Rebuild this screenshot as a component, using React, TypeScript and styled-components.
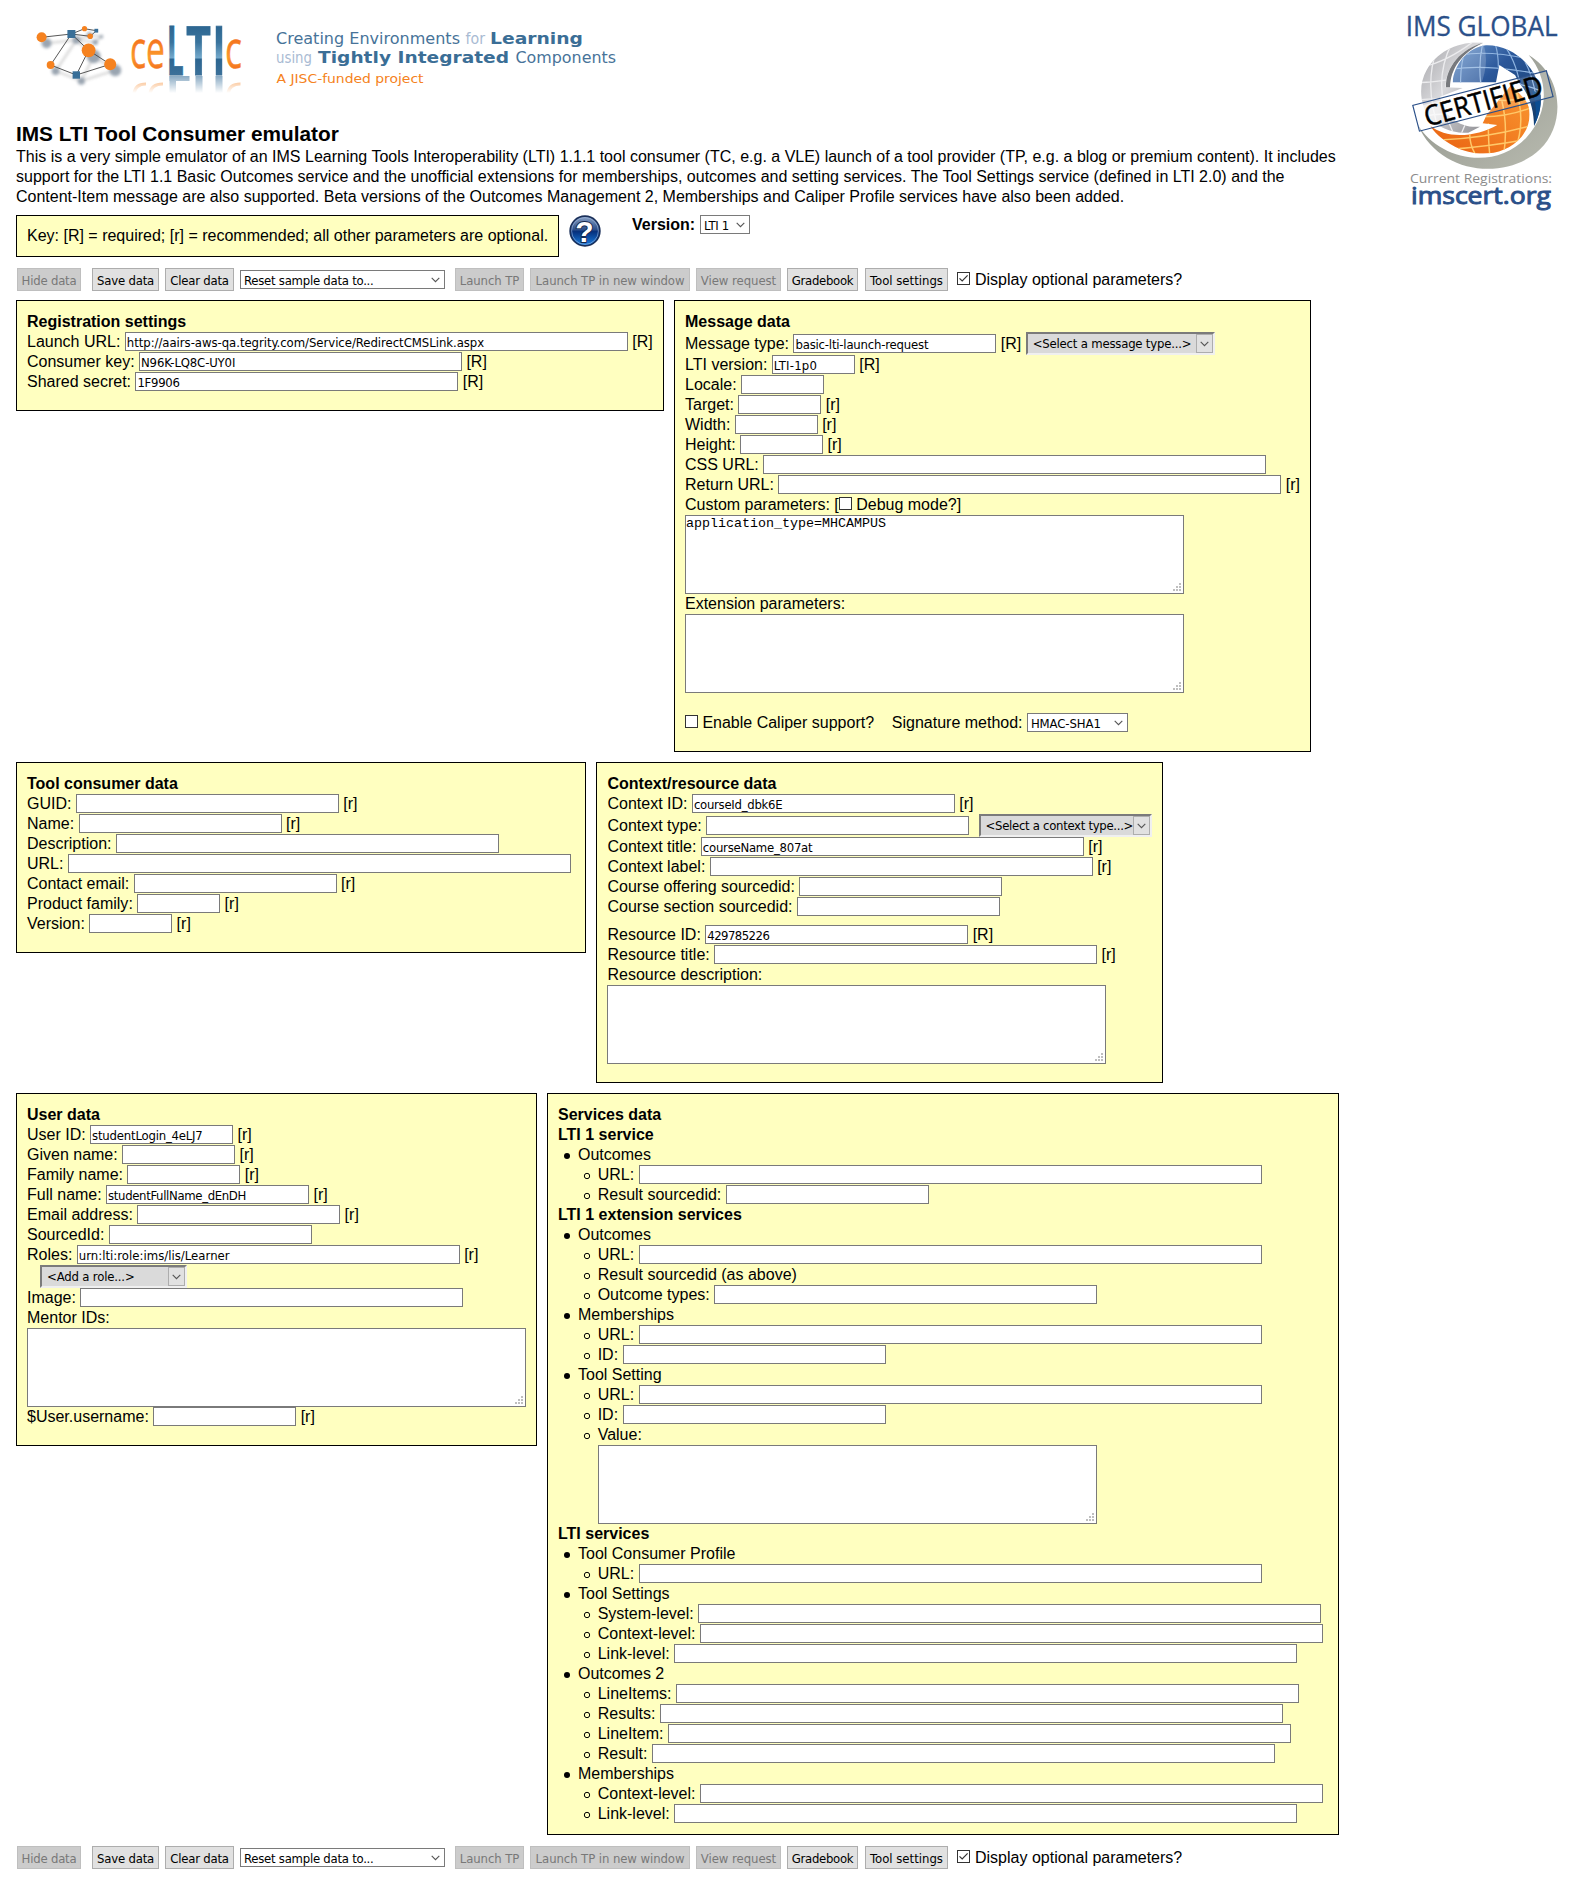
import React from "react";
import styled, { createGlobalStyle, css } from "styled-components";

const ui = `"DejaVu Sans Condensed", "DejaVu Sans", sans-serif`;

const GlobalStyle = createGlobalStyle`
  * { box-sizing: border-box; }
  body {
    margin: 0;
    background: #fff;
    color: #000;
    font: 16px/20px "Liberation Sans", Arial, sans-serif;
  }
`;

const Page = styled.div`
  width: 1583px;
  height: 1886px;
  overflow: hidden;
`;
const Top = styled.header`
  display: flex;
  align-items: flex-start;
  height: 268px;
`;
const Intro = styled.div`
  width: 1380px;
  padding-left: 16px;
`;
const Banner = styled.svg`
  display: block;
  width: 640px;
  height: 122px;
  margin-left: -16px;
`;
const Badge = styled.svg`
  display: block;
  width: 203px;
  height: 220px;
`;
const Heading = styled.h1`
  height: 25px;
  margin: 0;
  font-size: 20.8px;
  line-height: 23px;
`;
const Lead = styled.p`
  margin: 0 0 8px;
  width: 1334px;
  white-space: nowrap;
`;
const KeyRow = styled.div`
  display: flex;
  align-items: flex-start;
`;
const KeyBox = styled.div`
  width: 543px;
  height: 42px;
  padding: 10px;
  border: 1px solid #000;
  background: #ffffc0;
  white-space: nowrap;
`;
const HelpIcon = styled.svg`
  width: 32px;
  height: 32px;
  margin: 0 31px 0 10px;
`;
const VersionLabel = styled.strong`
  width: 68px;
  line-height: 19px;
`;

const Toolbar = styled.div<{ $before?: number }>`
  display: flex;
  align-items: flex-start;
  height: 32px;
  margin-top: ${(p) => p.$before ?? 0}px;
  padding-left: 17px;
`;
const Button = styled.button<{ $w: number; $gap: number; $track?: number }>`
  flex: none;
  width: ${(p) => p.$w}px;
  height: 23px;
  margin: 0 ${(p) => p.$gap}px 0 0;
  padding: 1px 0 0;
  border: 1px solid #adadad;
  background: #e1e1e1;
  color: #000;
  font: 13px/17px ${ui};
  letter-spacing: ${(p) => p.$track ?? -0.2}px;
  white-space: nowrap;
  &:disabled {
    border-color: #bfbfbf;
    background: #ccc;
    color: #787878;
  }
`;
const OptionLabel = styled.label`
  display: flex;
  gap: 5px;
  margin-left: 9px;
  line-height: 24px;
`;

const selectBase = css<{ $w: number; $track?: number }>`
  display: flex;
  flex: none;
  justify-content: space-between;
  width: ${(p) => p.$w}px;
  font: 13px/18px ${ui};
  letter-spacing: ${(p) => p.$track ?? -0.25}px;
  white-space: nowrap;
`;
const PlainSelect = styled.div<{ $w: number; $top?: number; $gap?: number; $track?: number }>`
  ${selectBase}
  height: 19px;
  margin: ${(p) => p.$top ?? 0}px ${(p) => p.$gap ?? 0}px 0 0;
  padding: 1px 4px 0 3px;
  border: 1px solid #7a7a7a;
  background: #fff;
  line-height: 17px;
`;
const GreySelect = styled.div<{ $w: number; $left?: number; $track?: number }>`
  ${selectBase}
  height: 23px;
  margin: -1px 0 0 ${(p) => p.$left ?? 0}px;
  padding-left: 5px;
  border: 2px solid;
  border-color: #7b7b7b #f0f0f0 #f0f0f0 #7b7b7b;
  background: #dadada;
  line-height: 20px;
`;
const DropButton = styled.span`
  display: flex;
  align-items: center;
  justify-content: center;
  width: 17px;
  height: 19px;
  border: 1px solid #adadad;
  background: #e1e1e1;
`;
const ArrowSvg = styled.svg`
  width: 9px;
  height: 6px;
  align-self: center;
`;

const Panels = styled.div`
  display: flex;
  align-items: flex-start;
  gap: 10px;
  margin: 0 0 10px 16px;
`;
const Panel = styled.section<{ $w: number; $bottom?: number; $left?: number }>`
  width: ${(p) => p.$w}px;
  padding: 10px 0 ${(p) => p.$bottom ?? 19}px ${(p) => p.$left ?? 10}px;
  border: 1px solid #000;
  background: #ffffc0;
`;
const PanelTitle = styled.h2`
  height: 20px;
  margin: 0;
  font-size: 16px;
  line-height: 22px;
`;
const Line = styled.div<{ $tall?: boolean; $before?: number }>`
  display: flex;
  align-items: flex-start;
  gap: 4.4px;
  height: ${(p) => (p.$tall ? 23 : 20)}px;
  padding-top: ${(p) => (p.$tall ? 2 : 0)}px;
  margin-top: ${(p) => p.$before ?? 0}px;
  line-height: 22px;
  white-space: nowrap;
`;
const TextInput = styled.input<{ $w: number; $track?: number }>`
  flex: none;
  width: ${(p) => p.$w}px;
  height: 19px;
  margin: 1px 0 0;
  padding: 2px 1px 0;
  border: 1px solid #7a7a7a;
  border-radius: 0;
  background: #fff;
  color: #000;
  font: 13px/15px ${ui};
  letter-spacing: ${(p) => p.$track ?? -0.2}px;
  outline: none;
`;
const AreaWrap = styled.div<{ $left?: number }>`
  position: relative;
  width: 499px;
  height: 79px;
  margin: 1px 0 -1px ${(p) => p.$left ?? 0}px;
`;
const AreaInput = styled.textarea`
  display: block;
  width: 499px;
  height: 79px;
  padding: 0;
  border: 1px solid #7a7a7a;
  background: #fff;
  color: #000;
  font: 13.333px/15px "Liberation Mono", monospace;
  resize: none;
  outline: none;
`;
const GripSvg = styled.svg`
  position: absolute;
  right: 3px;
  bottom: 3px;
  width: 8px;
  height: 8px;
`;
const Tick = styled.span<{ $top: number }>`
  flex: none;
  width: 13px;
  height: 13px;
  margin-top: ${(p) => p.$top}px;
  border: 1px solid #333;
  background: #fff;
  svg { display: block; width: 11px; height: 11px; }
`;
const Pair = styled.span`
  display: flex;
`;
const MarkSvg = styled.svg<{ $left: number }>`
  flex: none;
  width: 8px;
  height: 8px;
  margin: 7.5px 2.6px 0 ${(p) => p.$left}px;
`;

const Arrow = () => (
  <ArrowSvg viewBox="0 0 9 6">
    <path d="M0.7 0.8 4.5 4.7 8.3 0.8" fill="none" stroke="#555" strokeWidth="1.1" />
  </ArrowSvg>
);

const Check = ({ top, checked }: { top: number; checked?: boolean }) => (
  <Tick $top={top}>
    {checked && (
      <svg viewBox="0 0 11 11">
        <path d="M1.5 5.3 4.2 8 9.6 2.4" fill="none" stroke="#333" strokeWidth="1.2" />
      </svg>
    )}
  </Tick>
);

const Area = ({ value, left }: { value?: string; left?: number }) => (
  <AreaWrap $left={left}>
    <AreaInput defaultValue={value} spellCheck={false} />
    <GripSvg viewBox="0 0 8 8" fill="#bfbfbf">
      <path d="M6 0h2v2H6zM3 3h2v2H3zM6 3h2v2H6zM0 6h2v2H0zM3 6h2v2H3zM6 6h2v2H6z" />
    </GripSvg>
  </AreaWrap>
);

type FieldProps = {
  label: string;
  w: number;
  value?: string;
  track?: number;
  flag?: string;
  before?: number;
  tall?: boolean;
  children?: React.ReactNode;
};
const Field = ({ label, w, value, track, flag, before, tall, children }: FieldProps) => (
  <Line $before={before} $tall={tall}>
    <span>{label}:</span>
    <TextInput $w={w} $track={track} defaultValue={value} />
    {flag && <span>[{flag}]</span>}
    {children}
  </Line>
);

const Picker = ({ text, w, left, track }: { text: string; w: number; left?: number; track?: number }) => (
  <GreySelect $w={w} $left={left} $track={track}>
    <span>{text}</span>
    <DropButton><Arrow /></DropButton>
  </GreySelect>
);

const Item = ({ text }: { text: string }) => (
  <Line>
    <MarkSvg $left={5} viewBox="0 0 8 8"><circle cx="4" cy="4" r="3" /></MarkSvg>
    <span>{text}</span>
  </Line>
);
const SubItem = ({ text, w }: { text: string; w?: number }) => (
  <Line>
    <MarkSvg $left={24.7} viewBox="0 0 8 8">
      <circle cx="4" cy="4" r="2.7" fill="none" stroke="#000" strokeWidth="1" />
    </MarkSvg>
    <span>{text}</span>
    {w && <TextInput $w={w} />}
  </Line>
);

const Actions = ({ before }: { before?: number }) => (
  <Toolbar $before={before}>
    <Button $w={64} $gap={11} disabled>Hide data</Button>
    <Button $w={67} $gap={6}>Save data</Button>
    <Button $w={69} $gap={6}>Clear data</Button>
    <PlainSelect $w={205} $top={2} $gap={10}><span>Reset sample data to...</span><Arrow /></PlainSelect>
    <Button $w={69} $gap={6} $track={-0.1} disabled>Launch TP</Button>
    <Button $w={160} $gap={6} $track={-0.08} disabled>Launch TP in new window</Button>
    <Button $w={85} $gap={6} $track={-0.05} disabled>View request</Button>
    <Button $w={71} $gap={7} $track={-0.3}>Gradebook</Button>
    <Button $w={83} $gap={0} $track={0}>Tool settings</Button>
    <OptionLabel><Check top={4} checked />Display optional parameters?</OptionLabel>
  </Toolbar>
);

const nodes: [number, number, number, boolean][] = [
  [41.6, 37.3, 5, false], [84.5, 28.7, 2.6, false], [90.2, 36.3, 2.8, false],
  [88.6, 50.3, 6.9, false], [110.2, 64.3, 6, false], [50.6, 65, 3.9, false],
  [71.4, 34, 4, true], [96.3, 30.7, 1.9, true], [76.3, 75, 3.7, true],
];
const links = "M41.6 37.3 71.4 34 84.5 28.7 96.3 30.7 90.2 36.3 71.4 34 50.6 65 76.3 75 110.2 64.3M71.4 34 88.6 50.3 110.2 64.3M88.6 50.3 76.3 75";

const Wordmark = () => (
  <g fontFamily="'Open Sans', sans-serif">
    <g fill="url(#flame)" stroke="url(#flame)" strokeWidth=".4" fontSize="53">
      <text x="130" y="68" textLength="35" lengthAdjust="spacingAndGlyphs">ce</text>
      <text x="225" y="68" textLength="17" lengthAdjust="spacingAndGlyphs">c</text>
    </g>
    <g fill="url(#steel)" stroke="url(#steel)" strokeWidth=".8" fontSize="68" fontWeight="700">
      <text x="166.800" y="74.500" textLength="17" lengthAdjust="spacingAndGlyphs">L</text>
      <text x="186" y="74.500" textLength="25" lengthAdjust="spacingAndGlyphs">T</text>
      <text x="212.500" y="74.500" textLength="13" lengthAdjust="spacingAndGlyphs">I</text>
    </g>
  </g>
);

const CelticBanner = () => (
  <Banner viewBox="0 0 640 122">
    <defs>
      <filter id="soft"><feGaussianBlur stdDeviation="1.6" /></filter>
      <linearGradient id="steel" gradientUnits="userSpaceOnUse" x1="0" y1="25" x2="0" y2="75">
        <stop offset="0" stopColor="#2c6590" />
        <stop offset=".35" stopColor="#3a749d" />
        <stop offset=".66" stopColor="#74a9cb" />
        <stop offset=".68" stopColor="#2c6590" />
        <stop offset="1" stopColor="#3b7099" />
      </linearGradient>
      <linearGradient id="flame" gradientUnits="userSpaceOnUse" x1="0" y1="38" x2="0" y2="70">
        <stop offset="0" stopColor="#f4701d" />
        <stop offset=".6" stopColor="#fb9a2c" />
        <stop offset="1" stopColor="#f36f1e" />
      </linearGradient>
      <linearGradient id="fade" gradientUnits="userSpaceOnUse" x1="0" y1="76" x2="0" y2="93">
        <stop offset="0" stopColor="#fff" stopOpacity=".65" />
        <stop offset="1" stopColor="#fff" stopOpacity="0" />
      </linearGradient>
      <mask id="mirror"><rect x="120" y="76" width="130" height="17" fill="url(#fade)" /></mask>
    </defs>
    <g filter="url(#soft)" opacity=".7" transform="translate(5 6)">
      <path d={links} fill="none" stroke="#aaa" strokeWidth="1.500" />
      {nodes.map(([x, y, r], i) => <circle key={i} cx={x} cy={y} r={r} fill="#6f7f90" />)}
    </g>
    <path d={links} fill="none" stroke="#444" strokeWidth=".9" />
    {nodes.map(([x, y, r, sq], i) => sq
      ? <rect key={i} x={x - r} y={y - r} width={2 * r} height={2 * r} fill="#396f98" />
      : <circle key={i} cx={x} cy={y} r={r} fill="#f58220" />)}
    <Wordmark />
    <g mask="url(#mirror)">
      <g fill="#4b7da4">
        <rect x="169.500" y="76" width="6.500" height="17" />
        <rect x="169.500" y="76" width="20" height="5" />
        <rect x="195.500" y="76" width="7" height="17" />
        <rect x="215.500" y="76" width="7" height="17" />
      </g>
      <g fill="none" stroke="#f58220" strokeWidth="3.200">
        <path d="M134 94Q135 84 146 84" />
        <path d="M150 94Q151 84 163 84" />
        <path d="M228 94Q229 84 240.500 84" />
      </g>
    </g>
    <g fontFamily="'DejaVu Sans', sans-serif" fontSize="16" fill="#477399">
      <text x="276" y="44" textLength="184" lengthAdjust="spacingAndGlyphs">Creating Environments</text>
      <text x="465.500" y="44" fill="#a9bbd3" textLength="19.500" lengthAdjust="spacingAndGlyphs">for</text>
      <text x="490" y="44" fontWeight="700" fill="#3b6e96" textLength="93" lengthAdjust="spacingAndGlyphs">Learning</text>
      <text x="276" y="63" fill="#a9bbd3" textLength="36" lengthAdjust="spacingAndGlyphs">using</text>
      <text x="318" y="63" fontWeight="700" fill="#3b6e96" textLength="191" lengthAdjust="spacingAndGlyphs">Tightly Integrated</text>
      <text x="515.500" y="63" textLength="100.500" lengthAdjust="spacingAndGlyphs">Components</text>
      <text x="276.500" y="83" fontSize="13" fill="#f58220" textLength="147" lengthAdjust="spacingAndGlyphs">A JISC-funded project</text>
    </g>
  </Banner>
);

const CertifiedBadge = () => (
  <Badge viewBox="0 0 609 660">
    <defs>
      <linearGradient id="silver" x1="0" y1="0" x2="1" y2="1">
        <stop offset="0" stopColor="#9b9b9f" />
        <stop offset=".45" stopColor="#d9d9dc" />
        <stop offset="1" stopColor="#85858a" />
      </linearGradient>
      <linearGradient id="azure" x1="0" y1="0" x2="1" y2="1">
        <stop offset="0" stopColor="#6d9ad0" />
        <stop offset=".4" stopColor="#2b579a" />
        <stop offset="1" stopColor="#123a66" />
      </linearGradient>
      <linearGradient id="amber" x1="0" y1="1" x2="1" y2="0">
        <stop offset="0" stopColor="#e85f10" />
        <stop offset="1" stopColor="#fb9b33" />
      </linearGradient>
      <linearGradient id="stone" x1="0" y1="0" x2="1" y2="1">
        <stop offset="0" stopColor="#8c9088" />
        <stop offset="1" stopColor="#b9bbb0" />
      </linearGradient>
      <clipPath id="blueClip"><path d="M218 247C222 195 262 143 318 136C400 134 478 205 482 290C484 325 476 350 462 378C462 335 450 285 420 252L405 225L358 195L348 247Z" /></clipPath>
      <clipPath id="orangeClip"><path d="M150 376C200 420 290 410 352 375L308 370L320 345L394 254L436 300C458 330 450 380 425 410C375 470 285 472 225 440C185 420 160 395 150 376Z" /></clipPath>
      <clipPath id="greyClip"><path d="M310 128C245 145 196 200 197 262L248 264L180 290C190 350 240 385 300 380L265 398C215 402 175 380 150 358C118 310 115 255 140 210C170 155 235 122 310 128Z" /></clipPath>
    </defs>
    <text x="77" y="109" fontFamily="'Open Sans', sans-serif" fontSize="83" fill="#2b5089" stroke="#2b5089" strokeWidth="1" textLength="456" lengthAdjust="spacingAndGlyphs">IMS GLOBAL</text>
    <path d="M446 165C548 225 560 370 480 448C385 540 180 530 112 372C175 480 345 515 440 412C505 340 510 240 446 165Z" fill="url(#stone)" />
    <g clipPath="url(#greyClip)">
      <rect x="110" y="110" width="220" height="300" fill="url(#silver)" />
      <path d="M130 200Q200 185 280 125M110 248Q190 245 215 235M115 300Q190 290 300 310M130 350Q200 330 300 360M170 150Q130 260 180 400M215 130Q150 260 225 410M270 340 240 410" fill="none" stroke="#ececee" strokeWidth="4" />
    </g>
    <path d="M198 262C196 200 245 145 310 128C245 158 212 205 210 262Z" fill="#77797d" />
    <g clipPath="url(#blueClip)">
      <rect x="210" y="130" width="280" height="250" fill="url(#azure)" />
      <path d="M210 208Q320 190 490 225M240 165Q330 150 450 178M262 130Q240 190 242 250M308 130Q295 190 302 250M345 130Q355 160 355 200M375 140Q412 190 425 280M420 160Q455 210 468 290M400 250Q440 255 490 275" fill="none" stroke="#8fb4e0" strokeWidth="3.500" />
      <path d="M210 260V130H310Q330 190 300 260Z" fill="#fff" opacity=".2" />
    </g>
    <g clipPath="url(#orangeClip)">
      <rect x="140" y="240" width="320" height="230" fill="url(#amber)" />
      <path d="M180 420Q320 415 460 375M210 448Q320 440 430 420M310 350Q390 350 460 320M350 300Q400 305 450 290M270 390Q265 430 290 470M325 370Q325 430 330 470M365 300Q385 380 370 470M405 260Q440 360 405 450" fill="none" stroke="#ffc869" strokeWidth="4.500" />
    </g>
    <path d="M462 378C474 335 465 300 456 270L482 285C484 325 474 355 462 378Z" fill="#0b4d92" />
    <g transform="translate(308 300) rotate(-15.500)">
      <rect x="-207" y="-37" width="414" height="80" transform="rotate(1)" fill="#fff" fillOpacity=".15" stroke="#2b5089" strokeWidth="3.500" />
      <path d="M-202-33H-85V36H-202Z" fill="#fff" opacity=".6" />
      <text x="-182" y="33" fontFamily="'Open Sans', sans-serif" fontSize="84" fill="#000" stroke="#000" strokeWidth="1.500" textLength="366" lengthAdjust="spacingAndGlyphs">CERTIFIED</text>
    </g>
    <text x="90" y="549" fontFamily="'Open Sans', sans-serif" fontSize="37" fill="#8b8b8b" textLength="426" lengthAdjust="spacingAndGlyphs">Current Registrations:</text>
    <text x="93" y="612" fontFamily="'Open Sans', sans-serif" fontSize="73" fill="#2b5089" stroke="#2b5089" strokeWidth="3" textLength="420" lengthAdjust="spacingAndGlyphs">imscert.org</text>
  </Badge>
);

const Help = () => (
  <HelpIcon viewBox="0 0 32 32">
    <defs>
      <linearGradient id="orb" x1="0" y1="0" x2="0" y2="1">
        <stop offset="0" stopColor="#8ba3c6" />
        <stop offset=".45" stopColor="#2d4f8a" />
        <stop offset=".52" stopColor="#06307c" />
        <stop offset="1" stopColor="#1a7fe2" />
      </linearGradient>
    </defs>
    <circle cx="16" cy="16" r="14.900" fill="url(#orb)" stroke="#1a2f59" strokeWidth="1.600" />
    <circle cx="16" cy="16" r="13.400" fill="none" stroke="#9db6da" strokeWidth=".6" />
    <text x="15.500" y="26.500" textAnchor="middle" fontFamily="'Liberation Sans', sans-serif" fontWeight="700" fontSize="30" fill="#fff" stroke="#14264a" strokeWidth="1.800" strokeLinejoin="round" paintOrder="stroke">?</text>
  </HelpIcon>
);

export default function App() {
  return (
    <Page>
      <GlobalStyle />
      <Top>
        <Intro>
          <CelticBanner />
          <Heading>IMS LTI Tool Consumer emulator</Heading>
          <Lead>
            This is a very simple emulator of an IMS Learning Tools Interoperability (LTI) 1.1.1 tool consumer (TC, e.g. a VLE) launch of a tool provider (TP, e.g. a blog or premium content). It includes<br />
            support for the LTI 1.1 Basic Outcomes service and the unofficial extensions for memberships, outcomes and setting services. The Tool Settings service (defined in LTI 2.0) and the<br />
            Content-Item message are also supported. Beta versions of the Outcomes Management 2, Memberships and Caliper Profile services have also been added.
          </Lead>
          <KeyRow>
            <KeyBox>Key: [R] = required; [r] = recommended; all other parameters are optional.</KeyBox>
            <Help />
            <VersionLabel>Version:</VersionLabel>
            <PlainSelect $w={50} $track={-0.3}><span>LTI 1</span><Arrow /></PlainSelect>
          </KeyRow>
        </Intro>
        <CertifiedBadge />
      </Top>

      <Actions />

      <Panels>
        <Panel $w={648}>
          <PanelTitle>Registration settings</PanelTitle>
          <Field label="Launch URL" w={503} flag="R" track={-0.04} value="http://aairs-aws-qa.tegrity.com/Service/RedirectCMSLink.aspx" />
          <Field label="Consumer key" w={323} flag="R" track={-0.15} value="N96K-LQ8C-UY0I" />
          <Field label="Shared secret" w={323} flag="R" track={-0.3} value="1F9906" />
        </Panel>
        <Panel $w={637}>
          <PanelTitle>Message data</PanelTitle>
          <Field label="Message type" w={203} flag="R" value="basic-lti-launch-request" tall>
            <Picker text="<Select a message type...>" w={189} track={-0.2} />
          </Field>
          <Field label="LTI version" w={83} flag="R" track={0.2} value="LTI-1p0" />
          <Field label="Locale" w={83} />
          <Field label="Target" w={83} flag="r" />
          <Field label="Width" w={83} flag="r" />
          <Field label="Height" w={83} flag="r" />
          <Field label="CSS URL" w={503} />
          <Field label="Return URL" w={503} flag="r" />
          <Line>
            <span>Custom parameters:</span>
            <Pair>[<Check top={3} /></Pair>
            <span>Debug mode?]</span>
          </Line>
          <Area value="application_type=MHCAMPUS" />
          <Line>Extension parameters:</Line>
          <Area />
          <Line $before={20}>
            <Check top={3} />
            <span>Enable Caliper support?&nbsp;&nbsp;&nbsp;</span>
            <span>Signature method:</span>
            <PlainSelect $w={101} $top={1} $track={-0.1}><span>HMAC-SHA1</span><Arrow /></PlainSelect>
          </Line>
        </Panel>
      </Panels>

      <Panels>
        <Panel $w={570}>
          <PanelTitle>Tool consumer data</PanelTitle>
          <Field label="GUID" w={263} flag="r" />
          <Field label="Name" w={203} flag="r" />
          <Field label="Description" w={383} />
          <Field label="URL" w={503} />
          <Field label="Contact email" w={203} flag="r" />
          <Field label="Product family" w={83} flag="r" />
          <Field label="Version" w={83} flag="r" />
        </Panel>
        <Panel $w={567} $left={10.5}>
          <PanelTitle>Context/resource data</PanelTitle>
          <Field label="Context ID" w={263} flag="r" track={-0.28} value="courseId_dbk6E" />
          <Field label="Context type" w={263} tall>
            <Picker text="<Select a context type...>" w={173} left={5} track={-0.3} />
          </Field>
          <Field label="Context title" w={383} flag="r" track={-0.25} value="courseName_807at" />
          <Field label="Context label" w={383} flag="r" />
          <Field label="Course offering sourcedid" w={203} />
          <Field label="Course section sourcedid" w={203} />
          <Field label="Resource ID" w={263} flag="R" track={-0.55} value="429785226" before={8} />
          <Field label="Resource title" w={383} flag="r" />
          <Line>Resource description:</Line>
          <Area left={-0.5} />
        </Panel>
      </Panels>

      <Panels>
        <Panel $w={521}>
          <PanelTitle>User data</PanelTitle>
          <Field label="User ID" w={143} flag="r" track={-0.2} value="studentLogin_4eLJ7" />
          <Field label="Given name" w={113} flag="r" />
          <Field label="Family name" w={113} flag="r" />
          <Field label="Full name" w={203} flag="r" track={-0.34} value="studentFullName_dEnDH" />
          <Field label="Email address" w={203} flag="r" />
          <Field label="SourcedId" w={203} />
          <Field label="Roles" w={383} flag="r" track={0.02} value="urn:lti:role:ims/lis/Learner" />
          <Line $tall>
            <Picker text="<Add a role...>" w={147} left={13} track={-0.17} />
          </Line>
          <Field label="Image" w={383} />
          <Line>Mentor IDs:</Line>
          <Area />
          <Field label="$User.username" w={143} flag="r" />
        </Panel>
        <Panel $w={792} $bottom={11}>
          <PanelTitle>Services data</PanelTitle>
          <PanelTitle as="h3">LTI 1 service</PanelTitle>
          <Item text="Outcomes" />
          <SubItem text="URL:" w={623} />
          <SubItem text="Result sourcedid:" w={203} />
          <PanelTitle as="h3">LTI 1 extension services</PanelTitle>
          <Item text="Outcomes" />
          <SubItem text="URL:" w={623} />
          <SubItem text="Result sourcedid (as above)" />
          <SubItem text="Outcome types:" w={383} />
          <Item text="Memberships" />
          <SubItem text="URL:" w={623} />
          <SubItem text="ID:" w={263} />
          <Item text="Tool Setting" />
          <SubItem text="URL:" w={623} />
          <SubItem text="ID:" w={263} />
          <SubItem text="Value:" />
          <Area left={40} />
          <PanelTitle as="h3">LTI services</PanelTitle>
          <Item text="Tool Consumer Profile" />
          <SubItem text="URL:" w={623} />
          <Item text="Tool Settings" />
          <SubItem text="System-level:" w={623} />
          <SubItem text="Context-level:" w={623} />
          <SubItem text="Link-level:" w={623} />
          <Item text="Outcomes 2" />
          <SubItem text="LineItems:" w={623} />
          <SubItem text="Results:" w={623} />
          <SubItem text="LineItem:" w={623} />
          <SubItem text="Result:" w={623} />
          <Item text="Memberships" />
          <SubItem text="Context-level:" w={623} />
          <SubItem text="Link-level:" w={623} />
        </Panel>
      </Panels>

      <Actions before={11} />
    </Page>
  );
}
